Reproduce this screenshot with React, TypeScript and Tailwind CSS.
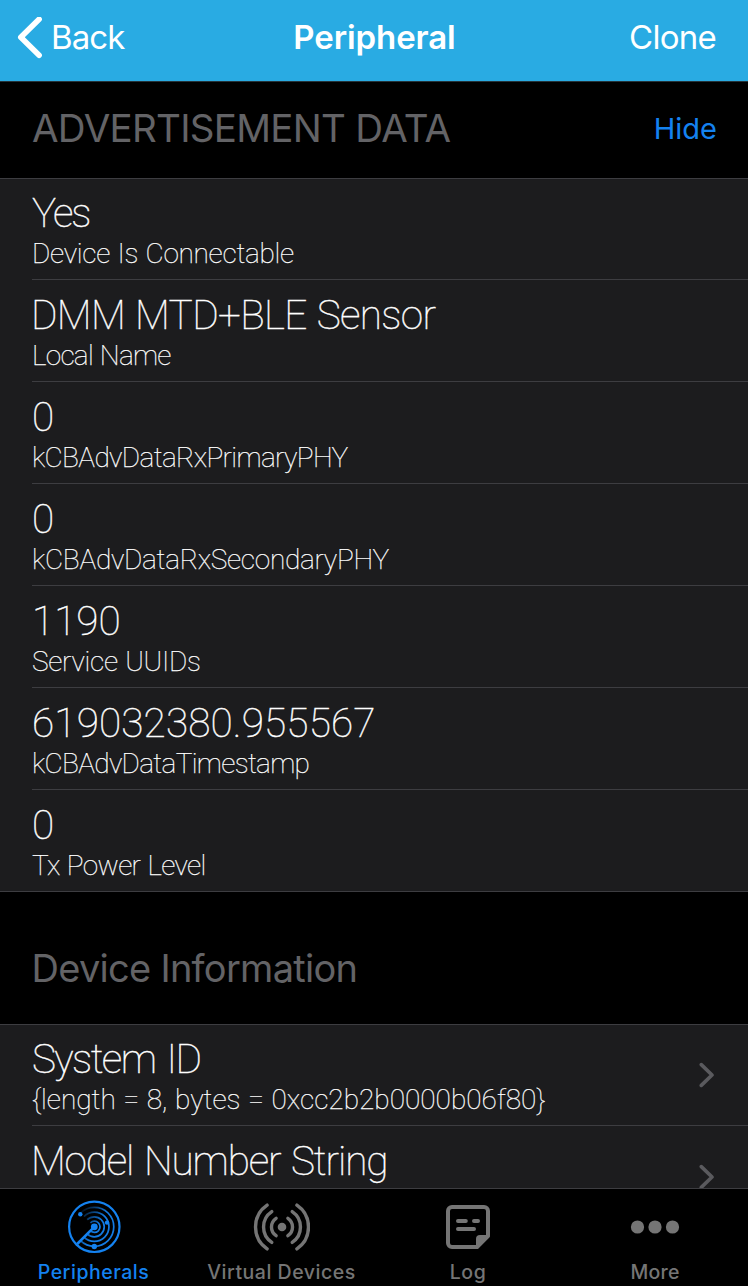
import React from "react";

type Entry = {
  title: string;
  detail?: string;
  titleClass?: string;
  detailClass?: string;
};

const advertisement: Entry[] = [
  { title: "Yes", titleClass: "tracking-[-2px]", detail: "Device Is Connectable", detailClass: "tracking-[-0.28px]" },
  { title: "DMM MTD+BLE Sensor", titleClass: "-ml-px tracking-[-0.64px]", detail: "Local Name", detailClass: "tracking-[-0.74px]" },
  { title: "0", detail: "kCBAdvDataRxPrimaryPHY", detailClass: "tracking-[-0.64px]" },
  { title: "0", detail: "kCBAdvDataRxSecondaryPHY", detailClass: "tracking-[-0.28px]" },
  { title: "1190", detail: "Service UUIDs", detailClass: "tracking-[-0.28px]" },
  { title: "619032380.955567", titleClass: "tracking-[0.15px]", detail: "kCBAdvDataTimestamp", detailClass: "tracking-[-0.68px]" },
  { title: "0", detail: "Tx Power Level", detailClass: "tracking-[-0.64px]" },
];

const deviceInfo: Entry[] = [
  {
    title: "System ID",
    titleClass: "tracking-[-1.6px] [word-spacing:3px]",
    detail: "{length = 8, bytes = 0xcc2b2b0000b06f80}",
    detailClass: "tracking-[0px]",
  },
  { title: "Model Number String", titleClass: "-ml-px tracking-[-1.12px] [word-spacing:2px]" },
];

function Row({ entry, last, chevron }: { entry: Entry; last?: boolean; chevron?: boolean }) {
  return (
    <div className={last ? "border-b border-[#3d3d41] pl-8" : "pl-8"}>
      <div
        className={
          last
            ? "flex h-[101px] items-start justify-between pr-[33px]"
            : "flex h-[102px] items-start justify-between border-b border-[#3d3d41] pr-[33px]"
        }
      >
        <div className="pt-[15px] font-['Roboto',sans-serif] font-thin whitespace-nowrap text-white [word-spacing:1px]">
          <div className={`text-[40.5px] leading-[40px] [-webkit-text-stroke:0.4px_white] ${entry.titleClass ?? ""}`}>
            {entry.title}
          </div>
          <div className={`mt-1 text-[28px] leading-[34px] [-webkit-text-stroke:0.25px_white] ${entry.detailClass ?? ""}`}>
            {entry.detail}
          </div>
        </div>
        {chevron && (
          <svg className="mt-[38px] h-[26px] w-4 shrink-0" viewBox="0 0 16 26" fill="none">
            <path d="M2.3 2.6L13 13L2.3 23.4" stroke="#5a5a5e" strokeWidth="3.6" strokeLinecap="round" strokeLinejoin="round" />
          </svg>
        )}
      </div>
    </div>
  );
}

function RadarIcon() {
  return (
    <svg className="h-[54px] w-[54px]" viewBox="0 0 54 54" fill="none" stroke="#1482f0">
      <defs>
        <linearGradient id="fade" gradientUnits="userSpaceOnUse" x1="12" y1="14" x2="32" y2="26">
          <stop offset="0" stopColor="#1482f0" stopOpacity="0.1" />
          <stop offset="1" stopColor="#1482f0" stopOpacity="0.95" />
        </linearGradient>
      </defs>
      <circle cx="27.3" cy="26.8" r="25.2" strokeWidth="2.2" />
      <g stroke="url(#fade)" strokeWidth="1.7">
        <path d="M13.5 40.6A19.5 19.5 0 1 0 13.5 13" />
        <path d="M17 37.1A14.6 14.6 0 1 0 17 16.5" />
        <path d="M20.2 33.9A10 10 0 1 0 20.2 19.7" />
        <path d="M23.4 30.7A5.6 5.6 0 1 0 23.4 22.9" />
      </g>
      <path d="M27.3 26.8L10.2 44" strokeWidth="2.6" />
      <g fill="#1482f0" stroke="none">
        <circle cx="27.3" cy="26.8" r="3.4" />
        <circle cx="13.3" cy="14.2" r="2.2" />
        <circle cx="40" cy="22.6" r="2.2" />
        <circle cx="27.3" cy="46.5" r="2.7" />
      </g>
    </svg>
  );
}

function BroadcastIcon() {
  return (
    <svg className="h-[54px] w-[58px]" viewBox="-30 -27 58 54" fill="none" stroke="#757575" strokeWidth="3.4" strokeLinecap="round">
      <circle r="4.3" fill="#757575" stroke="none" />
      <path d="M5.9 -8.7A10.5 10.5 0 0 1 5.9 8.7M-5.9 -8.7A10.5 10.5 0 0 0 -5.9 8.7" />
      <path d="M10.2 -15.4A18.5 18.5 0 0 1 10.2 15.4M-10.2 -15.4A18.5 18.5 0 0 0 -10.2 15.4" />
      <path d="M14.9 -21.9A26.5 26.5 0 0 1 14.9 21.9M-14.9 -21.9A26.5 26.5 0 0 0 -14.9 21.9" />
    </svg>
  );
}

function LogIcon() {
  return (
    <svg className="my-[5px] h-11 w-11" viewBox="0 0 44 44" fill="none" stroke="#757575" strokeWidth="4">
      <path d="M31 42H6A4 4 0 0 1 2 38V6A4 4 0 0 1 6 2H38A4 4 0 0 1 42 6V31Z" strokeLinejoin="round" />
      <path d="M30 43.5V34A4 4 0 0 1 34 30H43.5V31.5L32 43.5Z" fill="#757575" stroke="none" />
      <path d="M12 16H19.8M28 16H32M12 24H28" strokeLinecap="round" />
    </svg>
  );
}

function MoreIcon() {
  return (
    <svg className="h-[54px] w-[50px]" viewBox="0 0 50 54" fill="#757575">
      <circle cx="7.5" cy="27" r="6.6" />
      <circle cx="25" cy="27" r="6.6" />
      <circle cx="42.5" cy="27" r="6.6" />
    </svg>
  );
}

const tabs = [
  { label: "Peripherals", icon: <RadarIcon />, cls: "text-[#1482f0] tracking-[0.53px]" },
  { label: "Virtual Devices", icon: <BroadcastIcon />, cls: "pl-0.5 text-[#757575] tracking-[0.53px]" },
  { label: "Log", icon: <LogIcon />, cls: "pl-px text-[#757575] tracking-[0.6px]" },
  { label: "More", icon: <MoreIcon />, cls: "pl-px text-[#757575] tracking-[0.25px]" },
];

export default function App() {
  return (
    <div className="flex h-[1286px] w-[748px] flex-col overflow-hidden bg-black font-['Inter',sans-serif]">
      <header className="grid h-[82px] shrink-0 grid-cols-3 items-start border-b border-[#26343a] bg-[#29abe3] pt-[17px] text-[33px] leading-10 text-white">
        <div className="flex items-start pl-4">
          <svg className="h-11 w-7 shrink-0" viewBox="0 0 28 44" fill="none">
            <path d="M23.1 2.2L4.8 20.3L23.1 38.2" stroke="white" strokeWidth="5.6" strokeLinecap="round" strokeLinejoin="round" />
          </svg>
          <span className="ml-[7px] tracking-[-0.9px]">Back</span>
        </div>
        <div className="pl-px text-center font-semibold tracking-[-0.1px]">Peripheral</div>
        <div className="pr-8 text-right tracking-[-0.75px]">Clone</div>
      </header>

      <main className="min-h-0 flex-1 overflow-hidden">
        <div className="flex h-24 items-start justify-between pt-[26px] pr-[31px] pl-8 leading-10">
          <h2 className="text-[38.5px] tracking-[-0.7px] text-[#636366]">ADVERTISEMENT DATA</h2>
          <button className="pt-px text-[29px] text-[#1482f0]">Hide</button>
        </div>
        <section className="border-t border-[#3d3d41] bg-[#1c1c1e]">
          <div className="-mt-px">
            {advertisement.map((e, i) => (
              <Row key={i} entry={e} last={i === advertisement.length - 1} />
            ))}
          </div>
        </section>
        <div className="h-[132px] pt-14 pl-[31.5px] leading-10">
          <h2 className="text-[38px] tracking-[-0.72px] text-[#636366]">Device Information</h2>
        </div>
        <section className="border-t border-[#3d3d41] bg-[#1c1c1e]">
          <div className="-mt-px">
            {deviceInfo.map((e) => (
              <Row key={e.title} entry={e} chevron />
            ))}
          </div>
        </section>
      </main>

      <nav className="grid h-[98px] shrink-0 grid-cols-4 border-t border-[#3d3d41] bg-black pt-[11px]">
        {tabs.map((t) => (
          <div key={t.label} className="flex flex-col items-center">
            {t.icon}
            <span className={`mt-1.5 text-[19.5px] leading-6 font-medium whitespace-nowrap ${t.cls}`}>{t.label}</span>
          </div>
        ))}
      </nav>
    </div>
  );
}
